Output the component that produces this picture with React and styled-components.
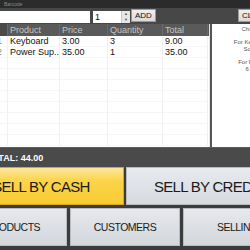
import React from 'react'
import styled, { createGlobalStyle } from 'styled-components'

const items = [
  { no: '1', product: 'Keyboard', price: '3.00', qty: '3', total: '9.00' },
  { no: '2', product: 'Power Sup...', price: '35.00', qty: '1', total: '35.00' }
]

const GlobalStyle = createGlobalStyle`
  html, body {
    margin: 0;
    padding: 0;
    width: 250px;
    height: 250px;
    overflow: hidden;
    background: #3c3c3c;
  }
  body {
    font-family: "Liberation Sans", Arial, sans-serif;
  }
`

const App = () => (
  <>
    <GlobalStyle />
    <Window>
      <TitleBar>
        <TitleText>Barcode</TitleText>
      </TitleBar>
      <Toolbar>
        <BarcodeInput />
        <Spinner>
          <SpinValue>1</SpinValue>
          <SpinArrows>
            <Arrow>▲</Arrow>
            <Arrow>▼</Arrow>
          </SpinArrows>
        </Spinner>
        <SmallButton>ADD</SmallButton>
        <Spacer />
        <SmallButton>CLEAR</SmallButton>
      </Toolbar>
      <Main>
        <Grid>
          <HeadRow>
            <HeadCell first />
            <HeadCell>Product</HeadCell>
            <HeadCell>Price</HeadCell>
            <HeadCell>Quantity</HeadCell>
            <HeadCell>Total</HeadCell>
          </HeadRow>
          {items.map((it) => (
            <Row key={it.no}>
              <Cell first>{it.no}</Cell>
              <Cell>{it.product}</Cell>
              <Cell>{it.price}</Cell>
              <Cell>{it.qty}</Cell>
              <Cell>{it.total}</Cell>
            </Row>
          ))}
          {[0, 1, 2, 3, 4, 5, 6, 7].map((i) => (
            <Row key={'e' + i}>
              <Cell first />
              <Cell />
              <Cell />
              <Cell />
              <Cell />
            </Row>
          ))}
        </Grid>
        <SidePanel>
          <PanelLine>Change</PanelLine>
          <PanelGap />
          <PanelLine>For Keyboard</PanelLine>
          <PanelLine>Sold 3</PanelLine>
          <PanelGap />
          <PanelLine>For Power</PanelLine>
          <PanelLine>6 left</PanelLine>
        </SidePanel>
      </Main>
      <TotalBar>TOTAL: 44.00</TotalBar>
      <BigRow>
        <BigButton primary>SELL BY CASH</BigButton>
        <BigButton>SELL BY CREDIT</BigButton>
      </BigRow>
      <NavRow>
        <NavButton>PRODUCTS</NavButton>
        <NavButton>CUSTOMERS</NavButton>
        <NavButton>SELLING</NavButton>
      </NavRow>
    </Window>
  </>
)

const Window = styled.div`
  width: 334px;
  height: 250px;
  margin-left: -42px;
  display: flex;
  flex-direction: column;
  background: #3c3c3c;
`

const TitleBar = styled.div`
  height: 8px;
  background: #2b2b2b;
  display: flex;
  align-items: center;
  padding-left: 46px;
`

const TitleText = styled.span`
  font-size: 5px;
  color: #8a8a8a;
  line-height: 8px;
`

const Toolbar = styled.div`
  height: 16px;
  background: #474747;
  display: flex;
  align-items: flex-end;
`

const BarcodeInput = styled.div`
  width: 132px;
  height: 12px;
  margin-bottom: 1px;
  background: #ffffff;
`

const Spinner = styled.div`
  width: 37px;
  height: 12px;
  margin: 0 0 1px 3px;
  background: #ffffff;
  display: flex;
  justify-content: space-between;
`

const SpinValue = styled.span`
  font-size: 9px;
  line-height: 12px;
  padding-left: 2px;
  color: #111;
`

const SpinArrows = styled.div`
  width: 8px;
  display: flex;
  flex-direction: column;
  background: #e6e6e6;
  border-left: 1px solid #c8c8c8;
`

const Arrow = styled.span`
  flex: 1;
  font-size: 4px;
  line-height: 6px;
  text-align: center;
  color: #555;
`

const SmallButton = styled.div`
  height: 11px;
  margin: 0 0 2px 1px;
  padding: 0 3px;
  background: linear-gradient(#f0f0f0, #d9d9d9);
  border: 1px solid #9a9a9a;
  font-size: 8px;
  line-height: 11px;
  color: #111;
  white-space: nowrap;
`

const Spacer = styled.div`
  width: 81px;
`

const Main = styled.div`
  height: 123px;
  display: flex;
  background: #ffffff;
`

const Grid = styled.div`
  width: 251px;
  display: flex;
  flex-direction: column;
  overflow: hidden;
  border-right: 1px solid #e4e4e4;
`

const cols = '50px 52px 48px 55px 45px'

const HeadRow = styled.div`
  height: 12px;
  display: grid;
  grid-template-columns: ${cols};
  background: #5a5a5a;
  flex-shrink: 0;
`

const HeadCell = styled.div`
  font-size: 9px;
  line-height: 12px;
  color: #c4c4c4;
  padding-left: 2px;
  background: ${(p) => (p.first ? '#4a4a4a' : 'transparent')};
  border-right: 1px solid #6a6a6a;
`

const Row = styled.div`
  height: 11px;
  display: grid;
  grid-template-columns: ${cols};
  flex-shrink: 0;
`

const Cell = styled.div`
  font-size: 9px;
  line-height: 11px;
  padding-left: 2px;
  text-align: ${(p) => (p.first ? 'right' : 'left')};
  padding-right: ${(p) => (p.first ? '5px' : '0')};
  color: ${(p) => (p.first ? '#8a8a8a' : '#111')};
  border-right: 1px solid #f0f0f0;
  border-bottom: 1px solid #f6f6f6;
  white-space: nowrap;
  overflow: hidden;
`

const SidePanel = styled.div`
  flex: 1;
  border-left: 2px solid #555;
  padding-top: 2px;
  display: flex;
  flex-direction: column;
  align-items: center;
`

const PanelLine = styled.div`
  font-size: 6px;
  line-height: 7px;
  color: #555;
  white-space: nowrap;
`

const PanelGap = styled.div`
  height: 6px;
`

const TotalBar = styled.div`
  height: 20px;
  background: #4a4a4a;
  border-top: 1px solid #5c5c5c;
  box-sizing: border-box;
  padding: 1px 0 0 28px;
  font-size: 9px;
  font-weight: bold;
  line-height: 19px;
  color: #ffffff;
`

const BigRow = styled.div`
  height: 38px;
  display: flex;
  gap: 2px;
  margin-bottom: 3px;
`

const BigButton = styled.div`
  flex: 1;
  display: flex;
  align-items: center;
  justify-content: center;
  font-size: 15px;
  letter-spacing: -0.7px;
  color: #1a1a1a;
  background: ${(p) =>
    p.primary
      ? 'linear-gradient(#fde7a0 0%, #fcd44a 35%, #f9cb32 100%)'
      : 'linear-gradient(#e8eaee 0%, #d6d9de 100%)'};
  border: 1px solid ${(p) => (p.primary ? '#d9a81e' : '#b8bbc0')};
  box-sizing: border-box;
  white-space: nowrap;
`

const NavRow = styled.div`
  height: 38px;
  display: flex;
  gap: 3px;
`

const NavButton = styled.div`
  flex: 1;
  display: flex;
  align-items: center;
  justify-content: center;
  font-size: 10.5px;
  letter-spacing: -0.5px;
  color: #1a1a1a;
  background: linear-gradient(#e6e8ec 0%, #d3d6db 100%);
  border: 1px solid #b8bbc0;
  box-sizing: border-box;
  white-space: nowrap;
`

export default App
